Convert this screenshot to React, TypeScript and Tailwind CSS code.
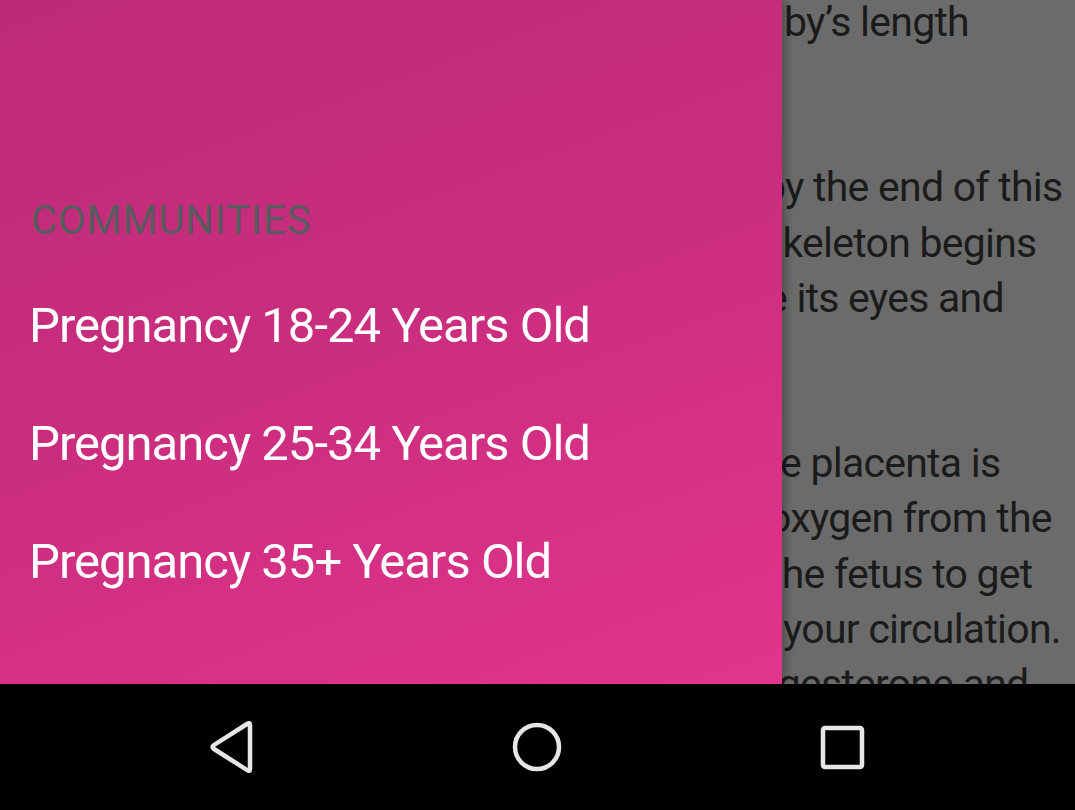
import React from "react";

const lines: { t: string; ml: number }[] = [
  { t: "by’s length", ml: 2 },
  { t: "", ml: 0 },
  { t: "", ml: 0 },
  { t: "by the end of this", ml: -19 },
  { t: "skeleton begins", ml: -20 },
  { t: "e its eyes and", ml: -16 },
  { t: "", ml: 0 },
  { t: "", ml: 0 },
  { t: "e placenta is", ml: -2 },
  { t: "oxygen from the", ml: -14 },
  { t: "the fetus to get", ml: -13 },
  { t: "your circulation.", ml: 1 },
  { t: "progesterone and", ml: -62 },
];

export default function App() {
  return (
    <div className="w-[1075px] h-[810px] flex flex-col bg-black overflow-hidden" style={{ fontFamily: "Roboto, 'Noto Sans', sans-serif" }}>
      <div className="relative h-[684px] shrink-0 flex bg-[#6b6b6b] overflow-hidden">
        <div className="w-[782px] shrink-0" />
        <div className="flex-1 flex flex-col mt-[-5px] text-[41px] leading-[55.17px] tracking-[-0.75px] text-[#1b1b1b] overflow-hidden">
          {lines.map((l, i) => (
            <div key={i} className="h-[55.17px] shrink-0 whitespace-nowrap" style={{ marginLeft: l.ml }}>
              {l.t}
            </div>
          ))}
        </div>
        <div className="absolute left-0 top-0 w-[782px] h-[684px] bg-[linear-gradient(160deg,#bc2a78_0%,#c92d7e_45%,#e2348c_100%)] shadow-[4px_0_8px_rgba(0,0,0,0.25)] flex flex-col">
          <div className="mt-[198px] pl-[31px] text-[40px] leading-[46px] tracking-[1px] text-[#575c5e]">COMMUNITIES</div>
          <div className="mt-[55px] flex flex-col gap-[64px] pl-[29px] text-[49px] leading-[54px] tracking-[-1px] text-white">
            <div>Pregnancy 18-24 Years Old</div>
            <div>Pregnancy 25-34 Years Old</div>
            <div>Pregnancy 35+ Years Old</div>
          </div>
        </div>
      </div>
      <div className="h-[126px] relative bg-black">
        <svg className="absolute left-0 top-0" width="1075" height="126" viewBox="0 0 1075 126">
          <path d="M250 41 L250 85 Q250 88 247 86 L214 65 Q211 63 214 61 L247 40 Q250 38 250 41 Z" fill="none" stroke="#e6e6e6" strokeWidth="4.5" strokeLinejoin="round" />
          <circle cx="537" cy="63" r="22" fill="none" stroke="#e6e6e6" strokeWidth="4.5" />
          <rect x="823" y="44" width="39" height="39" rx="2" fill="none" stroke="#e6e6e6" strokeWidth="4.5" />
        </svg>
      </div>
    </div>
  );
}
